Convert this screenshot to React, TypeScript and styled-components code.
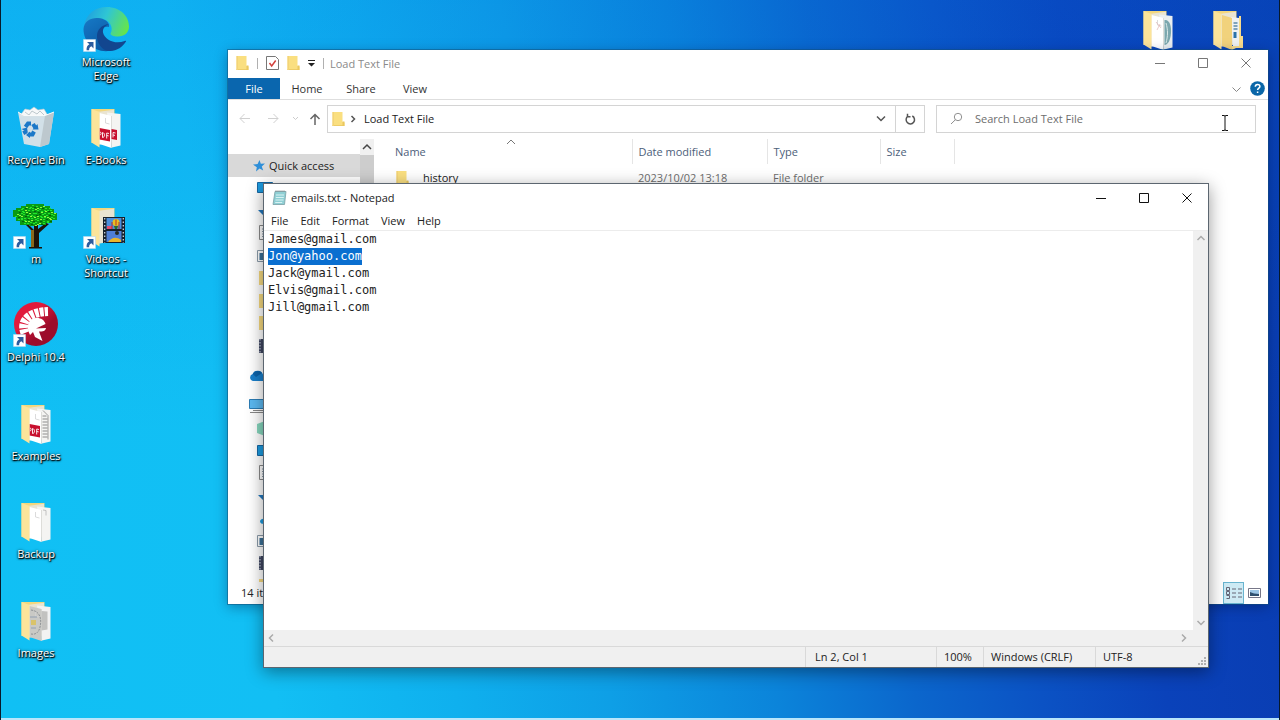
import React, { useEffect, useRef } from "react";
import styled, { createGlobalStyle, css } from "styled-components";

const GlobalStyle = createGlobalStyle`
  * { box-sizing: border-box; }
  body { margin: 0; font-family: "Open Sans", "Noto Sans", sans-serif; font-size: 11px; color: #222; overflow: hidden; }
  button, input, textarea { font: inherit; color: inherit; }
  svg { display: block; flex: none; }
`;

/* ---------- shared parts ---------- */

const Desktop = styled.div`
  position: relative;
  display: flex;
  justify-content: space-between;
  min-height: 100vh;
  padding-bottom: 3px;
  border: solid #071a2c;
  border-width: 0 1px;
  background:
    linear-gradient(#b9e6fb, #b9e6fb) bottom / 100% 2px no-repeat,
    linear-gradient(180deg, rgba(0, 110, 230, 0.18), rgba(0, 110, 230, 0) 60%),
    linear-gradient(81deg, #10c0f4 0%, #12bff4 20%, #0fb0ee 33%, #0e9fe6 44%, #0b84da 56%, #0b66cc 66%, #0b52c4 75%, #0a42ba 84%, #093aae 100%);
`;

const IconGrid = styled.ul<{ $top?: boolean }>`
  display: grid;
  grid-auto-flow: column;
  grid-template-rows: repeat(7, minmax(90px, 1fr));
  grid-auto-columns: 70px;
  margin: 0;
  padding: 0 ${(p) => (p.$top ? "16px" : "0")} 28px 0;
  list-style: none;
`;

const Shortcut = styled.li<{ $row?: number; $column?: number }>`
  display: flex;
  flex-direction: column;
  align-items: center;
  padding-top: 6px;
  grid-row: ${(p) => p.$row ?? "auto"};
  grid-column: ${(p) => p.$column ?? "auto"};
`;

const ShortcutLabel = styled.span`
  margin-top: 3px;
  color: #fff;
  line-height: 14px;
  text-align: center;
  text-shadow: 1px 1px 1px #000, 0 1px 2px #000, 0 0 3px rgba(0, 0, 0, 0.6);
`;

const Window = styled.section`
  position: absolute;
  display: flex;
  flex-direction: column;
  background: #fff;
  overflow: hidden;
`;

const TitleBar = styled.header`
  display: flex;
  align-items: center;
  flex: none;
  height: 28px;
  padding: 0 1px 2px 0;
`;

const Caption = styled.div<{ $muted?: boolean }>`
  flex: 1;
  color: ${(p) => (p.$muted ? "#8a8a8a" : "#222")};
`;

const plainButton = css`
  display: flex;
  align-items: center;
  justify-content: center;
  padding: 0;
  border: 0;
  background: none;
`;

const CaptionButton = styled.button`
  ${plainButton}
  width: 43px;
  height: 26px;
`;

const IconButton = styled.button<{ $width: number }>`
  ${plainButton}
  width: ${(p) => p.$width}px;
  height: 26px;
`;

/* ---------- explorer ---------- */

const ExplorerWindow = styled(Window)`
  top: 50px;
  right: 11px;
  bottom: 116px;
  left: 227px;
  box-shadow: 0 0 0 1px rgba(20, 80, 120, 0.5), 0 3px 12px rgba(0, 20, 60, 0.4);
`;

const QuickTools = styled.div`
  display: flex;
  align-items: center;
  gap: 8px;
  padding: 0 6px 0 8px;
`;

const Divider = styled.span`
  width: 1px;
  height: 11px;
  background: #b0b0b0;
`;

const RibbonTabs = styled.nav`
  display: flex;
  align-items: stretch;
  flex: none;
  height: 22px;
  border-bottom: 1px solid #dedede;
`;

const RibbonTab = styled.button<{ $active?: boolean }>`
  ${plainButton}
  width: ${(p) => (p.$active ? 52 : 54)}px;
  color: ${(p) => (p.$active ? "#fff" : "#333")};
  background: ${(p) => (p.$active ? "#0a66ae" : "none")};
`;

const RibbonEnd = styled.div`
  display: flex;
  align-items: center;
  gap: 8px;
  margin-left: auto;
  padding-right: 3px;
`;

const NavigationRow = styled.div`
  display: flex;
  align-items: center;
  flex: none;
  height: 39px;
  padding: 0 12px 2px 3px;
`;

const AddressBox = styled.div`
  display: flex;
  align-items: center;
  flex: 596;
  height: 28px;
  border: 1px solid #d4d4d4;
`;

const AddressPath = styled.button`
  ${plainButton}
  margin-right: auto;
  padding-left: 6px;
`;

const RefreshCell = styled.div`
  display: flex;
  align-items: center;
  height: 26px;
  border-left: 1px solid #d4d4d4;
`;

const SearchBox = styled.label`
  position: relative;
  display: flex;
  align-items: center;
  flex: 305;
  gap: 12px;
  height: 28px;
  margin-left: 11px;
  padding-left: 13px;
  border: 1px solid #d4d4d4;
`;

const SearchInput = styled.input`
  flex: 1;
  min-width: 0;
  padding: 0;
  border: 0;
  outline: 0;
  background: none;
  &::placeholder { color: #6d6d6d; opacity: 1; }
`;

const PointerMark = styled.span`
  position: absolute;
  top: 9px;
  right: 26px;
`;

const ExplorerBody = styled.div`
  display: flex;
  flex: 1;
  min-height: 0;
`;

const Sidebar = styled.aside`
  display: flex;
  flex-direction: column;
  width: 132px;
  padding-top: 15px;
  overflow: hidden;
`;

const QuickAccess = styled.button`
  ${plainButton}
  justify-content: flex-start;
  flex: none;
  gap: 4px;
  height: 23px;
  padding-left: 25px;
  background: #d9d9d9;
`;

const TreeGroup = styled.div`
  display: grid;
  grid-auto-rows: 1fr;
  align-items: center;
  flex: none;
  height: 180px;
  padding-left: 29px;
`;

const TreeRoot = styled.div`
  display: flex;
  align-items: center;
  flex: none;
  height: 30px;
  padding: 8px 0 0 21px;
`;

const SidebarScroll = styled.div`
  display: flex;
  flex-direction: column;
  width: 14px;
  background: #cdcdcd;
`;

const ScrollEnd = styled.button`
  ${plainButton}
  flex: none;
  width: 14px;
  height: 16px;
  background: #f0f0f0;
`;

const FileArea = styled.main`
  position: relative;
  flex: 1;
`;

const FileTable = styled.table`
  width: 100%;
  table-layout: fixed;
  border-collapse: collapse;
`;

const HeaderCell = styled.th<{ $width?: number; $first?: boolean }>`
  width: ${(p) => (p.$width ? `${p.$width}px` : "auto")};
  height: 25px;
  padding: 0 0 0 ${(p) => (p.$first ? 21 : 6)}px;
  border-right: 1px solid ${(p) => (p.$width ? "#e5e5e5" : "transparent")};
  color: #4c607a;
  font-weight: 400;
  text-align: left;
`;

const FileCell = styled.td`
  height: 27px;
  padding: 0 0 0 6px;
  color: #6d6d6d;
`;

const FileName = styled.div`
  display: flex;
  align-items: center;
  gap: 14px;
  padding-left: 16px;
  color: #222;
`;

const SortMark = styled.span`
  position: absolute;
  top: 0;
  left: 132px;
`;

const ExplorerStatus = styled.footer`
  display: flex;
  align-items: center;
  justify-content: space-between;
  flex: none;
  height: 22px;
  padding: 0 3px 2px 13px;
`;

const ViewSwitch = styled.div`
  display: flex;
  align-self: flex-start;
  height: 22px;
`;

const ViewButton = styled.button<{ $active?: boolean }>`
  ${plainButton}
  width: 21px;
  border: 1px solid ${(p) => (p.$active ? "#69b4cf" : "transparent")};
  background: ${(p) => (p.$active ? "#cdeaf4" : "none")};
`;

/* ---------- notepad ---------- */

const NotepadWindow = styled(Window)`
  top: 183px;
  right: 70px;
  bottom: 52px;
  left: 262px;
  border: 1px solid #5c6670;
  box-shadow: 0 4px 16px rgba(0, 0, 0, 0.4);
`;

const NotepadTitle = styled(TitleBar)`
  height: 27px;
  padding: 0 0 0 8px;
`;

const NotepadCaption = styled(Caption)`
  padding-left: 4px;
`;

const MenuBar = styled.nav`
  display: flex;
  flex: none;
  height: 20px;
  padding-left: 1px;
  border-bottom: 1px solid #ececec;
`;

const MenuButton = styled.button`
  ${plainButton}
  padding: 0 6px;
`;

const Editor = styled.div`
  display: grid;
  grid-template: 1fr 16px / 1fr 15px;
  flex: 1;
  min-height: 0;
`;

const TextArea = styled.textarea`
  min-width: 0;
  padding: 0 4px;
  border: 0;
  outline: 0;
  resize: none;
  overflow: hidden;
  white-space: pre;
  font-family: "DejaVu Sans Mono", monospace;
  font-size: 12px;
  line-height: 17px;
  &::selection { color: #fff; background: #0a6fd0; }
`;

const ScrollTrack = styled.div<{ $horizontal?: boolean }>`
  display: flex;
  flex-direction: ${(p) => (p.$horizontal ? "row" : "column")};
  align-items: center;
  justify-content: space-between;
  background: #f0f0f0;
`;

const NotepadStatus = styled.footer`
  position: relative;
  display: flex;
  align-items: center;
  justify-content: flex-end;
  flex: none;
  height: 21px;
  border-top: 1px solid #d9d9d9;
  background: #f0f0f0;
`;

const StatusCell = styled.span<{ $width: number; $indent?: boolean }>`
  width: ${(p) => p.$width}px;
  padding-left: ${(p) => (p.$indent ? 9 : 7)}px;
  border-left: 1px solid #d9d9d9;
  line-height: 20px;
  white-space: nowrap;
`;

const Grip = styled.span`
  position: absolute;
  right: 1px;
  bottom: 1px;
`;

/* ---------- drawings ---------- */

const Stroke = ({ d, w = 10, h = 10, color = "#444", width = 1 }: { d: string; w?: number; h?: number; color?: string; width?: number }) => (
  <svg width={w} height={h} viewBox={`0 0 ${w} ${h}`} fill="none" stroke={color} strokeWidth={width} aria-hidden>
    <path d={d} />
  </svg>
);

const CaptionButtons = ({ color }: { color: string }) => (
  <>
    <CaptionButton aria-label="Minimize"><Stroke d="M0 5.5h10" color={color} /></CaptionButton>
    <CaptionButton aria-label="Maximize"><Stroke d="M.5.5h9v9h-9z" color={color} /></CaptionButton>
    <CaptionButton aria-label="Close"><Stroke d="M.5.5l9 9M9.5.5l-9 9" color={color} /></CaptionButton>
  </>
);

const SmallFolder = () => (
  <svg width="13" height="16" viewBox="0 0 13 16" aria-hidden>
    <path d="M.5 1h10v10l2 .5V15H.5z" fill="#fadf80" />
    <path d="M10.5 10.500h2V15h-2zM.5 14.2h12v.8H.5z" fill="#eac860" />
    <path d="M.5 1h1.500v14H.5z" fill="#f3d478" />
  </svg>
);

const Arrow = () => (
  <g>
    <path d="M.5 33.5h12v12H.5z" fill="#fff" stroke="#b9d9ee" strokeWidth=".6" />
    <path d="M4 36h6.5v6.5L8.4 40.300C6.500 41.200 6 42.600 6.200 44.300H3.600C3.300 41.400 4.300 39.200 6.400 38.300z" fill="#2c5c9e" />
  </g>
);

const Art = ({ children }: { children: React.ReactNode }) => (
  <svg width="46" height="46" viewBox="0 0 46 46" aria-hidden>{children}</svg>
);

const FolderBase = ({ children }: { children?: React.ReactNode }) => (
  <>
    <path d="M8.500 5H31.500V39H8.500z" fill="#f3d77d" />
    <path d="M14 8L31 5.800V38L14 41z" fill="#e9e4d2" />
    {children}
    <path d="M8.500 5L16.500 8V43.500L8.500 38.500z" fill="#fce49a" />
  </>
);

const Pages = ({ back = "#f4f4f2", front = "#fff" }: { back?: string; front?: string }) => (
  <>
    <path d="M24 8.500L37.500 10V41.500L29 43.500z" fill={back} />
    <path d="M16.500 9L28.500 12V44L16.500 40z" fill={front} />
    <path d="M28.500 12V44" stroke="#d5d5d0" strokeWidth=".8" />
    <path d="M22.500 14v5l4 1" fill="none" stroke="#d2d2d2" strokeWidth=".8" />
  </>
);

const EdgeArt = () => (
  <Art>
    <defs>
      <linearGradient id="edgeTop" x1="0" y1=".3" x2="1" y2=".6">
        <stop offset="0" stopColor="#1f9fe0" /><stop offset=".45" stopColor="#2fc6d4" /><stop offset="1" stopColor="#66e44d" />
      </linearGradient>
      <linearGradient id="edgeBody" x1="0" y1="0" x2=".6" y2="1">
        <stop offset="0" stopColor="#1679c6" /><stop offset="1" stopColor="#0c59a4" />
      </linearGradient>
    </defs>
    <path d="M1 20C3 8 12 1 24 1C37 1 46 10 46 20.500C46 27 41 30.500 35 30.500C30 30.500 27 29 27.500 27.500C31 22 27 13 17 12.500C9 12 3 16 1 20z" fill="url(#edgeTop)" />
    <path d="M.5 23C1 15 8 11.500 15 12C22 12.500 27 16.500 26 21C21 19.500 16 24 17 30C18 38 24 42 31 44C13 49 .5 37 .5 23z" fill="url(#edgeBody)" />
    <path d="M26 18C18 19 14.500 24 14 29C13.500 37 19 45 27 45C34 45 40 40.500 43 35.500C43.300 34.700 42.500 34.500 41.700 35C32 39 21.500 33.500 20 26.500C19.500 22.500 22 19.500 26 18z" fill="#12468f" />
    <Arrow />
  </Art>
);

const RecycleArt = () => (
  <Art>
    <path d="M9 9l3-4 5 1 4-3 4 3 6-1 3 5 3 2H7z" fill="#f6f8f9" stroke="#bcc8ce" strokeWidth=".6" />
    <path d="M12 8l4 3 3-4 5 3 3-3 4 4" fill="none" stroke="#aebbc2" strokeWidth=".8" />
    <path d="M5 8l6 3.500h21L41 8l-5 32-9 3-16-3z" fill="#dde3e7" opacity=".95" />
    <path d="M32 11.500L41 8l-5 32-9 3z" fill="#bdc8ce" />
    <path d="M5 8l6 3.500h21L41 8" fill="none" stroke="#f7fafb" strokeWidth="1" />
    <g fill="none" stroke="#1c78c8" strokeWidth="4">
      <path d="M12.500 23l2.500-3.500h3" /><path d="M20 20l2.500 4" /><path d="M21 27.500l-1.500 3h-4" /><path d="M13 30l-2-3.500" />
    </g>
    <path d="M19.500 25.500h6l-1-5.500zM17 27.500l-4 3.500 4 3zM8.500 25l5.500-1.500.8 5z" fill="#1c78c8" />
  </Art>
);

const leaves = Array.from({ length: 110 }, (_, i) => {
  const angle = i * 2.4;
  const radius = Math.sqrt((i + 0.5) / 110);
  return { x: Math.round(22 + Math.cos(angle) * radius * 20), y: Math.round(12 + Math.sin(angle) * radius * 10) };
});

const TreeArt = () => (
  <Art>
    <path d="M12 21l8 8v15h-4v1.500h13V44h-3V30l10-9-3-1-8 6v-5h-4v6l-6-6z" fill="#1e1408" />
    <path d="M18 27h3v17h-3z" fill="#8a6a1c" />
    <path d="M8 3h5V1h18v2h6v3h4v4h3v7h-5v3h-6v2H24v1h-7v-1H7v-4H3v-4H0V7h3V5h5z" fill="#0a9a14" />
    {leaves.map((leaf, i) => (
      <rect key={i} x={leaf.x} y={leaf.y} width="2" height="1" fill={i % 5 === 0 ? "#03620a" : i % 3 === 0 ? "#8dfc3e" : "#22e82a"} />
    ))}
    <Arrow />
  </Art>
);

const DelphiArt = () => (
  <Art>
    <defs>
      <linearGradient id="delphi" x1="0" y1="0" x2="1" y2="1">
        <stop offset=".35" stopColor="#e01a3c" /><stop offset=".65" stopColor="#9c0c2b" />
      </linearGradient>
    </defs>
    <circle cx="23" cy="23" r="22" fill="url(#delphi)" />
    <path d="M17 34C13 26 15 19 21 17.500C26 16 31 18 32.500 23L23 27.500L33 27C32.500 30 30 30.500 26 30.500L29.500 40L22 36L20 31z" fill="#fff" />
    <path d="M12 32C7 20 16 11 35 10.500" fill="none" stroke="#fff" strokeWidth="9" strokeDasharray="4 1" />
    <Arrow />
  </Art>
);

const VideosArt = () => (
  <Art>
    <FolderBase />
    <path d="M20 14h22v26H20z" fill="#17202c" />
    <path d="M23.500 15h15v11h-15z" fill="#4b8fdc" /><path d="M23.500 28h15v11h-15z" fill="#4f7fd6" />
    <circle cx="33" cy="19.500" r="3.500" fill="#e8c020" /><path d="M31 23h4l-1 3h-2z" fill="#2c6b28" />
    <path d="M24 23h5v3h-5z" fill="#e24d70" /><path d="M29 19v7M33 16.500v6M36 19v7" stroke="#b8302a" />
    <path d="M25 39c3-4 8-6 13-2v2z" fill="#e9b52c" /><circle cx="34" cy="30" r="2" fill="#272a20" />
    <path d="M21.700 15v25M40.300 15v25" stroke="#c9d3dd" strokeWidth="1.300" strokeDasharray="1.500 2" />
    <Arrow />
  </Art>
);

const PdfTag = () => (
  <>
    <path d="M16.500 24l10.500 2v11.500l-10.500-2z" fill="#c8102e" />
    <path d="M17 28c1.500 0 1.500 3 0 3M19.500 33.500v-5c2.700.5 2.700 5 0 5M23.700 34.500v-5.500l2.300.5M23.700 31.500l2 .4" fill="none" stroke="#fff" strokeWidth=".9" />
  </>
);

const EbooksArt = () => (
  <Art>
    <FolderBase><Pages /><path d="M28.500 25l5.500 1v10l-5.500-1z" fill="#c8102e" /><path d="M30 33.500v-5l2.500.5M30 31l2 .4" fill="none" stroke="#fff" strokeWidth=".9" /><PdfTag /></FolderBase>
  </Art>
);

const ExamplesArt = () => (
  <Art>
    <FolderBase>
      <Pages />
      <path d="M29.500 16h4M29.500 19h5M29.500 22h5M29.500 25h5M29.500 28h5M29.500 31h5M29.500 34h5M29.500 37h5" stroke="#8c8c8c" />
      <path d="M30 10.500l5 5v24" fill="none" stroke="#777" strokeWidth=".7" />
      <PdfTag />
    </FolderBase>
  </Art>
);

const BackupArt = () => (
  <Art>
    <FolderBase><Pages /><path d="M30 12l3 .5v5" fill="none" stroke="#b5b5b5" strokeWidth=".8" /></FolderBase>
  </Art>
);

const ImagesArt = () => (
  <Art>
    <FolderBase>
      <Pages back="#f2f2f2" front="#c9c9c5" />
      <path d="M28.500 14l6 .500v18l-6 1z" fill="#c2c2c0" />
      <path d="M18 13c9 1 11 9 9 17-1 5-4 8-9 7" fill="none" stroke="#8e9296" strokeDasharray="2 1" />
      <path d="M18 23h5v5h-5z" fill="#d9c36a" /><path d="M17 20h7M18 31h5" stroke="#8797ad" strokeWidth=".8" />
    </FolderBase>
  </Art>
);

const PhotoArt = () => (
  <Art>
    <FolderBase>
      <Pages back="#e9eef0" />
      <path d="M29.500 14c5-1 7 6 6.500 13s-3 12-6.500 12z" fill="#7ba7ae" />
      <path d="M31 17c2 7 2 13 0 20" stroke="#d9e8e8" fill="none" />
      <path d="M21 16l5 6M22 24l3-6" stroke="#e0b4b4" strokeWidth=".7" />
    </FolderBase>
  </Art>
);

const NestedArt = () => (
  <Art>
    <FolderBase>
      <path d="M26 11l8 1v30l-6-1z" fill="#eef1f2" />
      <path d="M28.500 17h4M28.500 20h4M28.500 23h4" stroke="#5c89a8" strokeWidth="1.500" />
      <path d="M28.500 26h3v6h-3z" fill="#2b72a8" />
      <path d="M17 9l10 3v32l-10-4z" fill="#f1d27c" />
      <path d="M34 10h2v20h2v12h-7l-4 2v-4h7z" fill="#f8dc8c" />
    </FolderBase>
  </Art>
);

type TreeKind = "desktop" | "download" | "document" | "picture" | "folder" | "video" | "cube" | "music";

const treeArt: Record<TreeKind, React.ReactNode> = {
  desktop: <path d="M.5 2.500h15v10H.5z" fill="#1c9be0" stroke="#1668a4" />,
  download: <path d="M6 1h4v6h5l-7 7-7-7h5z" fill="#2277bd" />,
  document: <><path d="M2.500.500h11v14h-11z" fill="#fff" stroke="#8a8a8a" /><path d="M5 4h6M5 6.500h6M5 9h6M5 11.500h6" stroke="#8a9aa8" /></>,
  picture: <><path d="M.500 2.500h15v11H.500z" fill="#fff" stroke="#8a9aa8" /><path d="M2.500 5h11v7h-11z" fill="#3b7198" /></>,
  folder: <path d="M2 1h10v10h2v4H2z" fill="#f6d97f" />,
  video: <><path d="M2 1h12v14H2z" fill="#3f4660" /><path d="M3 1v14" stroke="#cfd5e4" strokeDasharray="1.500 1.500" /></>,
  cube: <path d="M0 4l8-3 8 3v9l-8 3-8-3z" fill="#86d6bd" />,
  music: <path d="M7 2h2v9a3 2.500 0 1 1-2-2z" fill="#1c9be0" />,
};

const TreeIcon = ({ kind }: { kind: TreeKind }) => (
  <svg width="16" height="16" viewBox="0 0 16 16" aria-hidden>{treeArt[kind]}</svg>
);

/* ---------- content ---------- */

const shortcuts = [
  { label: "Microsoft Edge", art: <EdgeArt />, row: 1, column: 2 },
  { label: "Recycle Bin", art: <RecycleArt />, row: 2, column: 1 },
  { label: "E-Books", art: <EbooksArt />, row: 2, column: 2 },
  { label: "m", art: <TreeArt />, row: 3, column: 1 },
  { label: "Videos - Shortcut", art: <VideosArt />, row: 3, column: 2 },
  { label: "Delphi 10.4", art: <DelphiArt />, row: 4, column: 1 },
  { label: "Examples", art: <ExamplesArt />, row: 5, column: 1 },
  { label: "Backup", art: <BackupArt />, row: 6, column: 1 },
  { label: "Images", art: <ImagesArt />, row: 7, column: 1 },
];

const quickItems: TreeKind[] = ["desktop", "download", "document", "picture", "folder", "folder", "folder", "video"];
const computerItems: TreeKind[] = ["cube", "desktop", "document", "download", "music", "picture", "video", "folder"];

const emails = ["James@gmail.com", "Jon@yahoo.com", "Jack@ymail.com", "Elvis@gmail.com", "Jill@gmail.com"];

const Explorer = () => (
  <ExplorerWindow aria-label="Load Text File">
    <TitleBar>
      <QuickTools>
        <SmallFolder />
        <Divider />
        <svg width="13" height="16" viewBox="0 0 13 16" aria-hidden>
          <path d="M.5 1.500h9l3 3v10H.5z" fill="#fff" stroke="#777" />
          <path d="M3.500 8l2.200 3 4-5.500" fill="none" stroke="#d2413c" strokeWidth="1.500" />
        </svg>
        <SmallFolder />
        <svg width="7" height="8" viewBox="0 0 7 8" aria-hidden><path d="M0 1h7v1H0zM0 4h7L3.500 7.500z" fill="#222" /></svg>
        <Divider />
      </QuickTools>
      <Caption $muted>Load Text File</Caption>
      <CaptionButtons color="#777" />
    </TitleBar>
    <RibbonTabs>
      <RibbonTab $active>File</RibbonTab>
      <RibbonTab>Home</RibbonTab>
      <RibbonTab>Share</RibbonTab>
      <RibbonTab>View</RibbonTab>
      <RibbonEnd>
        <Stroke d="M1.500 3.500l4 4 4-4" w={11} color="#888" />
        <svg width="15" height="15" viewBox="0 0 15 15" aria-hidden>
          <circle cx="7.500" cy="7.500" r="7.300" fill="#0a66a8" />
          <path d="M5.300 5.700c0-3 4.600-3 4.600-.2 0 1.700-2.300 1.700-2.300 3.600M7.600 10.500v1.600" fill="none" stroke="#fff" strokeWidth="1.500" />
        </svg>
      </RibbonEnd>
    </RibbonTabs>
    <NavigationRow>
      <IconButton $width={28} aria-label="Back"><Stroke d="M11 5.500H1M5.500 1L1 5.500 5.500 10" w={12} h={11} color="#d0d0d0" /></IconButton>
      <IconButton $width={28} aria-label="Forward"><Stroke d="M1 5.500h10M6.500 1L11 5.500 6.500 10" w={12} h={11} color="#d0d0d0" /></IconButton>
      <IconButton $width={16} aria-label="Recent locations"><Stroke d="M1 1l2.500 2.500L6 1" w={7} h={5} color="#ccc" /></IconButton>
      <IconButton $width={24} aria-label="Up"><Stroke d="M6 12V1.500M1.500 6L6 1.500 10.500 6" w={12} h={12} color="#666" width={1.5} /></IconButton>
      <AddressBox>
        <IconButton $width={20} aria-label="Folder"><SmallFolder /></IconButton>
        <Stroke d="M3.500 2l3 3-3 3" color="#555" width={1.5} />
        <AddressPath>Load Text File</AddressPath>
        <IconButton $width={28} aria-label="Previous locations"><Stroke d="M1 2.500l4 4 4-4" color="#555" width={1.5} /></IconButton>
        <RefreshCell>
          <IconButton $width={28} aria-label="Refresh">
            <Stroke d="M8.300 3A4.200 4.200 0 1 1 4 3.200M3.500 .8v3h3" w={12} h={12} color="#555" width={1.5} />
          </IconButton>
        </RefreshCell>
      </AddressBox>
      <SearchBox>
        <svg width="13" height="13" viewBox="0 0 13 13" fill="none" stroke="#909090" aria-hidden>
          <circle cx="8" cy="5" r="3.700" /><path d="M5.300 7.800L1 12" />
        </svg>
        <SearchInput type="text" aria-label="Search Load Text File" placeholder="Search Load Text File" />
        <PointerMark>
          <Stroke d="M1 .5h2l1 .5 1-.5h2M4 1v14M1 15.500h2l1-.5 1 .5h2" w={8} h={16} color="#111" />
        </PointerMark>
      </SearchBox>
    </NavigationRow>
    <ExplorerBody>
      <Sidebar>
        <QuickAccess>
          <svg width="12" height="12" viewBox="0 0 12 12" aria-hidden>
            <path d="M6.500 0l1.300 3.800 4.200-.2-3.200 2.800 1.400 4.200-3.600-2-3.600 3 .8-4.400L0 4.600l4.600-.6z" fill="#2f8fd8" />
          </svg>
          Quick access
        </QuickAccess>
        <TreeGroup>{quickItems.map((kind, i) => <TreeIcon key={i} kind={kind} />)}</TreeGroup>
        <TreeRoot>
          <svg width="18" height="12" viewBox="0 0 18 12" aria-hidden>
            <path d="M4 11a3.600 3.600 0 0 1-.3-7A5.500 5.500 0 0 1 14 4.500a3.300 3.300 0 0 1 0 6.500z" fill="#1a7fca" />
            <path d="M3.700 4A5.500 5.500 0 0 1 13 3L7 7z" fill="#0d62a8" />
          </svg>
        </TreeRoot>
        <TreeRoot>
          <svg width="18" height="14" viewBox="0 0 18 14" aria-hidden>
            <path d="M.5.500h17v9H.5z" fill="#5bb8f0" stroke="#2b7cb4" /><path d="M4 11.500h10M1 13.500h16" stroke="#888" />
          </svg>
        </TreeRoot>
        <TreeGroup>{computerItems.map((kind, i) => <TreeIcon key={i} kind={kind} />)}</TreeGroup>
      </Sidebar>
      <SidebarScroll>
        <ScrollEnd aria-label="Scroll up"><Stroke d="M1 7l4-4 4 4" color="#444" width={1.5} /></ScrollEnd>
      </SidebarScroll>
      <FileArea>
        <SortMark><Stroke d="M1 5l4-4 4 4" h={6} color="#777" /></SortMark>
        <FileTable>
          <thead>
            <tr>
              <HeaderCell $width={258} $first>Name</HeaderCell>
              <HeaderCell $width={135}>Date modified</HeaderCell>
              <HeaderCell $width={113}>Type</HeaderCell>
              <HeaderCell $width={74}>Size</HeaderCell>
              <HeaderCell as="td" />
            </tr>
          </thead>
          <tbody>
            <tr>
              <FileCell><FileName><SmallFolder />history</FileName></FileCell>
              <FileCell>2023/10/02 13:18</FileCell>
              <FileCell>File folder</FileCell>
              <FileCell />
              <FileCell />
            </tr>
          </tbody>
        </FileTable>
      </FileArea>
    </ExplorerBody>
    <ExplorerStatus>
      <span>14 items</span>
      <ViewSwitch>
        <ViewButton $active aria-label="Details">
          <svg width="16" height="12" viewBox="0 0 16 12" fill="none" stroke="#667" aria-hidden>
            <path d="M.5.500h3v3h-3zM.5 4.500h3v3h-3zM.5 8.500h3v3h-3M6 2h4M6 6h4M6 10h4M12 2h4M12 6h4M12 10h4" />
          </svg>
        </ViewButton>
        <ViewButton aria-label="Large icons">
          <svg width="13" height="10" viewBox="0 0 13 10" aria-hidden>
            <path d="M.5.500h12v9H.5z" fill="#fff" stroke="#778" /><path d="M2 2h9v6H2z" fill="#9cc6e6" /><path d="M2 4l4 1.500 5 .500v2H2z" fill="#30506e" />
          </svg>
        </ViewButton>
      </ViewSwitch>
    </ExplorerStatus>
  </ExplorerWindow>
);

const Notepad = () => {
  const area = useRef<HTMLTextAreaElement>(null);
  useEffect(() => {
    const start = emails[0].length + 1;
    area.current?.focus();
    area.current?.setSelectionRange(start, start + emails[1].length);
  }, []);

  return (
    <NotepadWindow aria-label="emails.txt - Notepad">
      <NotepadTitle>
        <svg width="15" height="16" viewBox="0 0 15 16" aria-hidden>
          <path d="M3 1.500h11l-1.500 13H1z" fill="#8fcfd4" stroke="#7a9ea4" strokeWidth=".8" />
          <path d="M4 5h8M3.800 7.500h8M3.500 10h8M3.200 12.500h7" stroke="#d8f2f3" />
          <path d="M3.500 1h10" stroke="#777" strokeDasharray="1 1" />
        </svg>
        <NotepadCaption>emails.txt - Notepad</NotepadCaption>
        <CaptionButtons color="#111" />
      </NotepadTitle>
      <MenuBar>
        {["File", "Edit", "Format", "View", "Help"].map((name) => <MenuButton key={name}>{name}</MenuButton>)}
      </MenuBar>
      <Editor>
        <TextArea ref={area} aria-label="Document text" spellCheck={false} defaultValue={emails.join("\n")} />
        <ScrollTrack>
          <Stroke d="M1.500 9l3.500-3.500L8.500 9" h={14} color="#aaa" width={1.5} />
          <Stroke d="M1.500 5l3.500 3.500L8.500 5" h={14} color="#aaa" width={1.5} />
        </ScrollTrack>
        <ScrollTrack $horizontal>
          <Stroke d="M9 1.500L5.500 5 9 8.500" w={14} color="#aaa" width={1.5} />
          <Stroke d="M5 1.500L8.500 5 5 8.500" w={16} color="#aaa" width={1.5} />
        </ScrollTrack>
        <ScrollTrack />
      </Editor>
      <NotepadStatus>
        <StatusCell $width={131} $indent>Ln 2, Col 1</StatusCell>
        <StatusCell $width={47}>100%</StatusCell>
        <StatusCell $width={112}>Windows (CRLF)</StatusCell>
        <StatusCell $width={113}>UTF-8</StatusCell>
        <Grip>
          <svg width="9" height="9" viewBox="0 0 9 9" fill="#b0b0b0" aria-hidden>
            <path d="M6 0h2v2H6zM3 3h2v2H3zM6 3h2v2H6zM0 6h2v2H0zM3 6h2v2H3zM6 6h2v2H6z" />
          </svg>
        </Grip>
      </NotepadStatus>
    </NotepadWindow>
  );
};

export default function App() {
  return (
    <>
      <GlobalStyle />
      <Desktop>
        <IconGrid>
          {shortcuts.map(({ label, art, row, column }) => (
            <Shortcut key={label} $row={row} $column={column}>
              {art}
              <ShortcutLabel>{label}</ShortcutLabel>
            </Shortcut>
          ))}
        </IconGrid>
        <IconGrid $top>
          <Shortcut $row={1}><PhotoArt /></Shortcut>
          <Shortcut $row={1}><NestedArt /></Shortcut>
        </IconGrid>
        <Explorer />
        <Notepad />
      </Desktop>
    </>
  );
}
